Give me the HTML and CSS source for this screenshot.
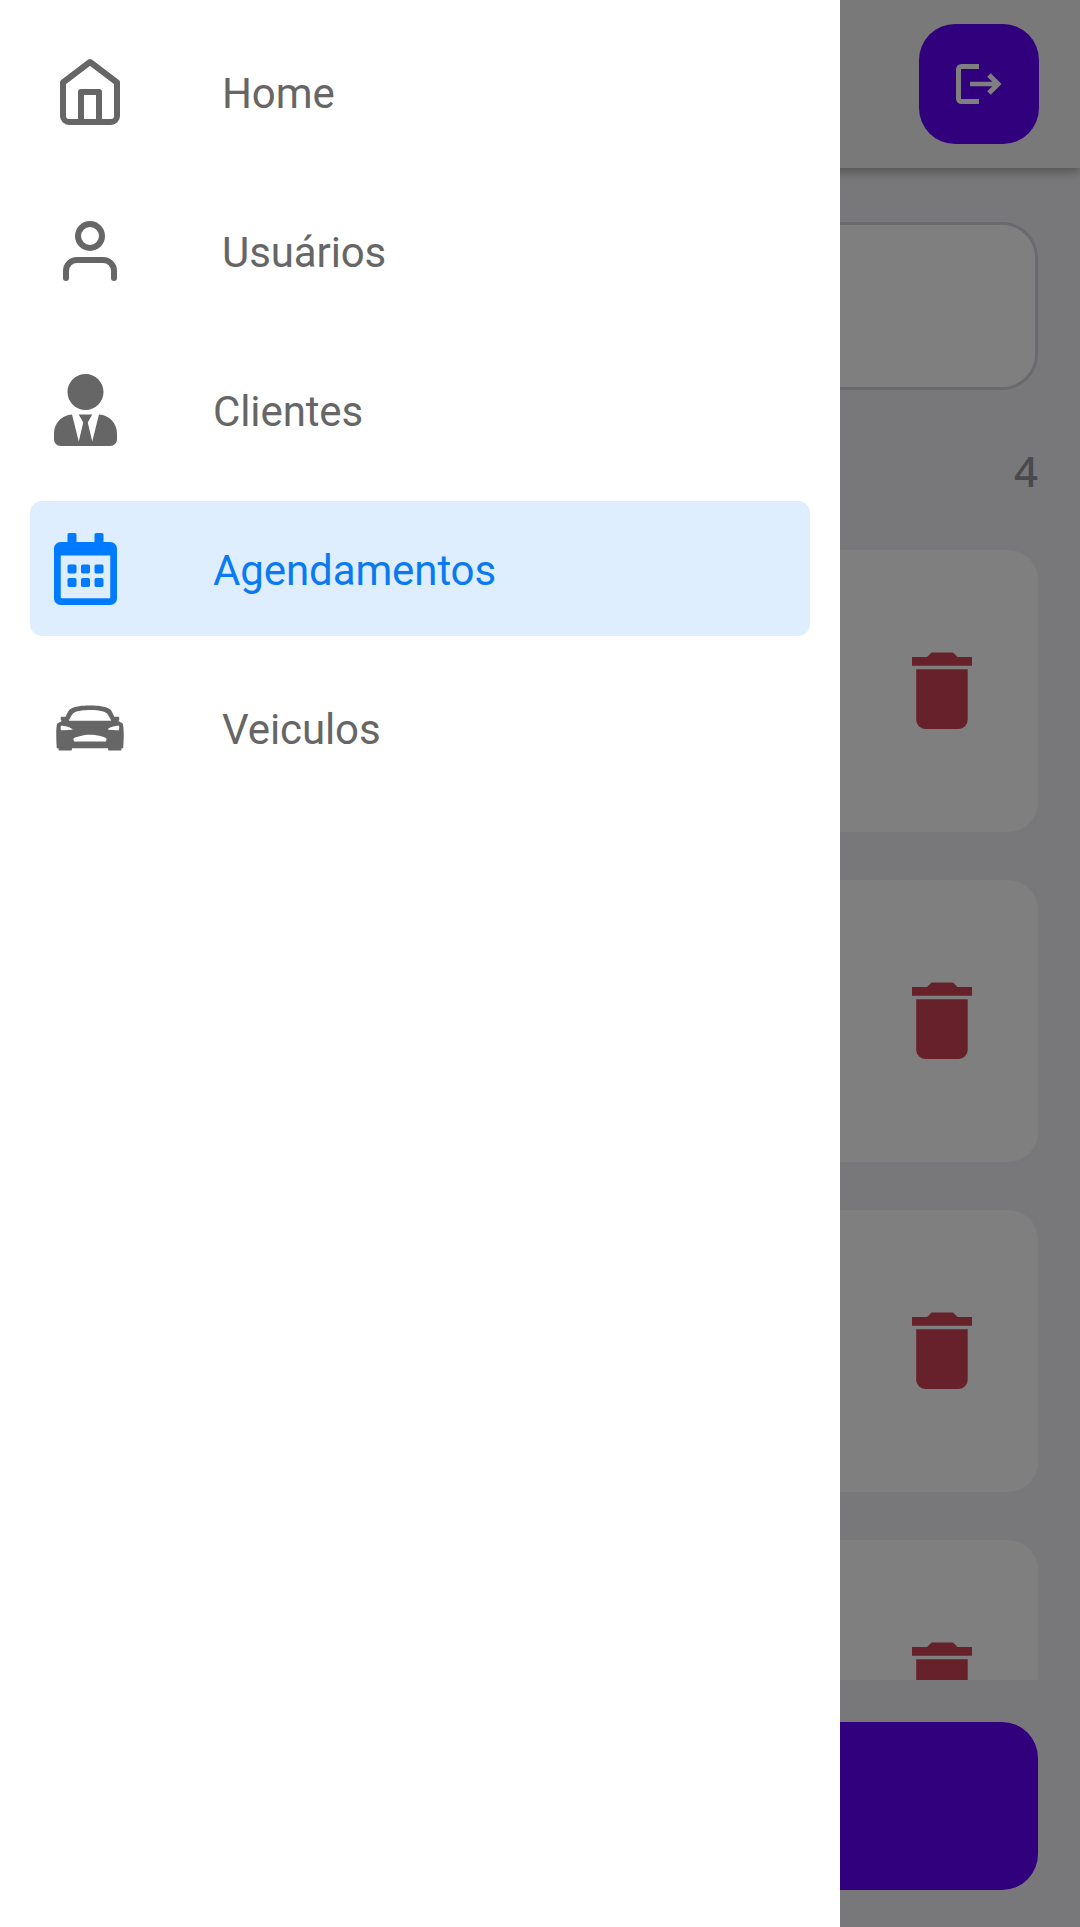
FILE: index.html
```html
<!DOCTYPE html>
<html lang="pt-BR">
<head>
<meta charset="utf-8">
<title>Agendamentos</title>
<link rel="stylesheet" href="styles.css">
</head>
<body>
<svg class="defs" aria-hidden="true">
  <symbol id="trash" viewBox="0 0 60 77">
    <path d="M0 5h15l4.500-4.500h21.500l4.500 4.500H60v8.700H0zM4.200 17.300h51.500V68a9 9 0 0 1-9 9H13.200a9 9 0 0 1-9-9z"/>
  </symbol>
</svg>
<div class="screen">
  <header class="header">
    <button class="logout" aria-label="Sair">
      <svg width="46" height="40" viewBox="0 0 46 40" fill="none" stroke="#fff">
        <path stroke-width="5" d="M23 2.500H5.500a3 3 0 0 0-3 3v29a3 3 0 0 0 3 3H23M33 11l9 9-9 9"/>
        <path stroke-width="4.500" d="M14 20h28"/>
      </svg>
    </button>
  </header>
  <main class="content">
    <div class="search"></div>
    <div class="count">4</div>
    <div class="list">
      <div class="card"><svg class="trash"><use href="#trash"/></svg></div>
      <div class="card"><svg class="trash"><use href="#trash"/></svg></div>
      <div class="card"><svg class="trash"><use href="#trash"/></svg></div>
      <div class="card"><svg class="trash"><use href="#trash"/></svg></div>
    </div>
    <button class="add" aria-label="Adicionar"></button>
  </main>
  <div class="overlay"></div>
  <nav class="drawer">
    <a class="item">
      <svg width="72" height="73" viewBox="0 0 72 73" fill="none" stroke="currentColor" stroke-width="6" stroke-linejoin="round">
        <path d="M36 7 9 27.500V61a6 6 0 0 0 6 6h42a6 6 0 0 0 6-6V27.500zM27 67V37h18v30"/>
      </svg>
      <span>Home</span>
    </a>
    <a class="item">
      <svg width="72" height="73" viewBox="0 0 72 73" fill="none" stroke="currentColor" stroke-width="6" stroke-linecap="round">
        <circle cx="36" cy="22" r="12"/>
        <path d="M12 64v-7a11 11 0 0 1 11-11h26a11 11 0 0 1 11 11v7"/>
      </svg>
      <span>Usuários</span>
    </a>
    <a class="item">
      <svg class="narrow" viewBox="0 0 448 512" fill="currentColor">
        <path d="M224 256c70.700 0 128-57.300 128-128S294.700 0 224 0 96 57.300 96 128s57.300 128 128 128zm95.800 32.600L272 480l-32-136 32-56h-96l32 56-32 136-47.800-191.400C56.900 292 0 350.300 0 422.400V464c0 26.500 21.500 48 48 48h352c26.500 0 48-21.500 48-48v-41.600c0-72.100-56.900-130.400-128.200-133.800z"/>
      </svg>
      <span>Clientes</span>
    </a>
    <a class="item active">
      <svg class="narrow" viewBox="0 0 448 512" fill="currentColor">
        <path d="M148 288h-40c-6.600 0-12-5.400-12-12v-40c0-6.600 5.400-12 12-12h40c6.600 0 12 5.400 12 12v40c0 6.600-5.400 12-12 12zm108-12v-40c0-6.600-5.400-12-12-12h-40c-6.600 0-12 5.400-12 12v40c0 6.600 5.400 12 12 12h40c6.600 0 12-5.400 12-12zm96 0v-40c0-6.600-5.400-12-12-12h-40c-6.600 0-12 5.400-12 12v40c0 6.600 5.400 12 12 12h40c6.600 0 12-5.400 12-12zm-96 96v-40c0-6.600-5.400-12-12-12h-40c-6.600 0-12 5.400-12 12v40c0 6.600 5.400 12 12 12h40c6.600 0 12-5.400 12-12zm-96 0v-40c0-6.600-5.400-12-12-12h-40c-6.600 0-12 5.400-12 12v40c0 6.600 5.400 12 12 12h40c6.600 0 12-5.400 12-12zm192 0v-40c0-6.600-5.400-12-12-12h-40c-6.600 0-12 5.400-12 12v40c0 6.600 5.400 12 12 12h40c6.600 0 12-5.400 12-12zm96-260v352c0 26.500-21.500 48-48 48H48c-26.500 0-48-21.500-48-48V112c0-26.500 21.500-48 48-48h48V12c0-6.600 5.400-12 12-12h40c6.600 0 12 5.400 12 12v52h128V12c0-6.600 5.400-12 12-12h40c6.600 0 12 5.400 12 12v52h48c26.500 0 48 21.500 48 48zm-48 346V160H48v298c0 3.300 2.700 6 6 6h340c3.300 0 6-2.700 6-6z"/>
      </svg>
      <span>Agendamentos</span>
    </a>
    <a class="item">
      <svg width="72" height="72" viewBox="0 0 512 512" fill="currentColor">
        <path d="M488 224c-3-5-32.610-17.790-32.610-17.790 5.150-2.660 8.670-3.210 8.670-14.210 0-12-.06-16-8.060-16h-27.140c-.11-.24-.23-.49-.34-.74-17.520-38.260-19.870-47.930-46-60.950C347.470 96.880 281.760 96 256 96s-91.470.88-126.490 18.310c-26.160 13-25.510 19.690-46 60.950 0 .11-.21.4-.4.740H55.940c-7.940 0-8 4-8 16 0 11 3.520 11.550 8.670 14.210C56.610 206.210 28 220 24 224s-8 32-8 80 4 96 4 96h11.940c0 14 2.060 16 8.060 16h80c6 0 8-2 8-16h256c0 14 2 16 8 16h82c4 0 6-3 6-16h12s4-49 4-96-5-75-8-80zm-362.740 44.940A516.940 516.940 0 0 1 70.420 272c-20.420 0-21.120 1.310-22.560-11.440a72.160 72.160 0 0 1 .51-17.510L49 240h3c12 0 23.270.51 44.550 6.780a98 98 0 0 1 30.090 15.060C131 265 132 268 132 268zm247.160 72L368 352H144s.39-.61-5-11.180c-4-7.820 1-12.820 8.910-15.660C163.230 319.640 208 304 256 304s93.660 13.480 108.500 21.160C370 328 376.830 330 372.420 340.940zm-257-136.530a96.230 96.230 0 0 1-9.700.07c2.610-4.640 4.060-9.810 6.610-15.210 8-17 17.150-36.240 33.440-44.350 23.540-11.720 72.330-17 110.230-17s86.690 5.240 110.230 17c16.290 8.110 25.400 27.360 33.440 44.350 2.570 5.450 4 10.660 6.680 15.330-2 .11-4.300 0-9.790-.19zm347.720 56.110C461 273 463 272 441.580 272a516.940 516.940 0 0 1-54.840-3.060c-2.850-.51-3.660-5.320-1.380-7.100a93.840 93.840 0 0 1 30.090-15.060c21.280-6.270 33.260-7.110 45.090-6.690a3.220 3.220 0 0 1 3.090 3 70.180 70.180 0 0 1-.49 17.470z"/>
      </svg>
      <span>Veiculos</span>
    </a>
  </nav>
</div>
</body>
</html>
```
FILE: styles.css
```css
* { box-sizing: border-box; }
body { margin: 0; font-family: Roboto, sans-serif; font-size: 42px; }
button { border: 0; padding: 0; }
.defs { position: absolute; width: 0; height: 0; }
.screen {
  position: relative;
  display: flex;
  flex-direction: column;
  height: 1927px;
  overflow: hidden;
  background: #f1f1f4;
}
.header {
  position: relative;
  display: flex;
  flex: none;
  align-items: center;
  justify-content: flex-end;
  height: 168px;
  padding-right: 41px;
  background: #f3f3f5;
  box-shadow: 0 3px 11px rgba(0, 0, 0, .36);
}
.logout {
  display: flex;
  align-items: center;
  justify-content: center;
  width: 120px;
  height: 120px;
  border-radius: 36px;
  background: #6200f8;
}
.content {
  display: flex;
  flex: 1;
  flex-direction: column;
  min-height: 0;
  padding: 54px 42px 37px;
}
.search {
  flex: none;
  height: 168px;
  border: 3px solid #d2d2dc;
  border-radius: 36px;
  background: #fff;
}
.count {
  flex: none;
  height: 160px;
  padding-top: 56px;
  font-family: "Noto Sans", sans-serif;
  font-weight: 500;
  line-height: 50px;
  text-align: right;
  color: #92929c;
}
.list {
  display: flex;
  flex: 1;
  flex-direction: column;
  gap: 48px;
  min-height: 0;
  overflow: hidden;
}
.card {
  display: flex;
  flex: none;
  align-items: center;
  justify-content: flex-end;
  height: 282px;
  padding: 0 66px 1px 0;
  border-radius: 30px;
  background: #fff;
}
.trash { width: 60px; height: 77px; fill: #ce4254; }
.add {
  flex: none;
  height: 168px;
  margin-top: 42px;
  border-radius: 36px;
  background: #6200f8;
}
.overlay { position: absolute; inset: 0; background: rgba(0, 0, 0, .5); }
.drawer {
  position: absolute;
  inset: 0 auto 0 0;
  display: flex;
  flex-direction: column;
  gap: 24px;
  width: 840px;
  padding: 24px 30px;
  background: #fff;
}
.item {
  display: flex;
  align-items: center;
  gap: 96px;
  height: 135px;
  padding-left: 24px;
  border-radius: 12px;
  color: #666;
}
.item span { padding-top: 4px; letter-spacing: -.1px; }
.item.active { background: #deeeff; color: #007aff; }
.item.active span { color: #0a7af2; }
.narrow { width: 63px; height: 72px; margin-top: 1px; }
```
